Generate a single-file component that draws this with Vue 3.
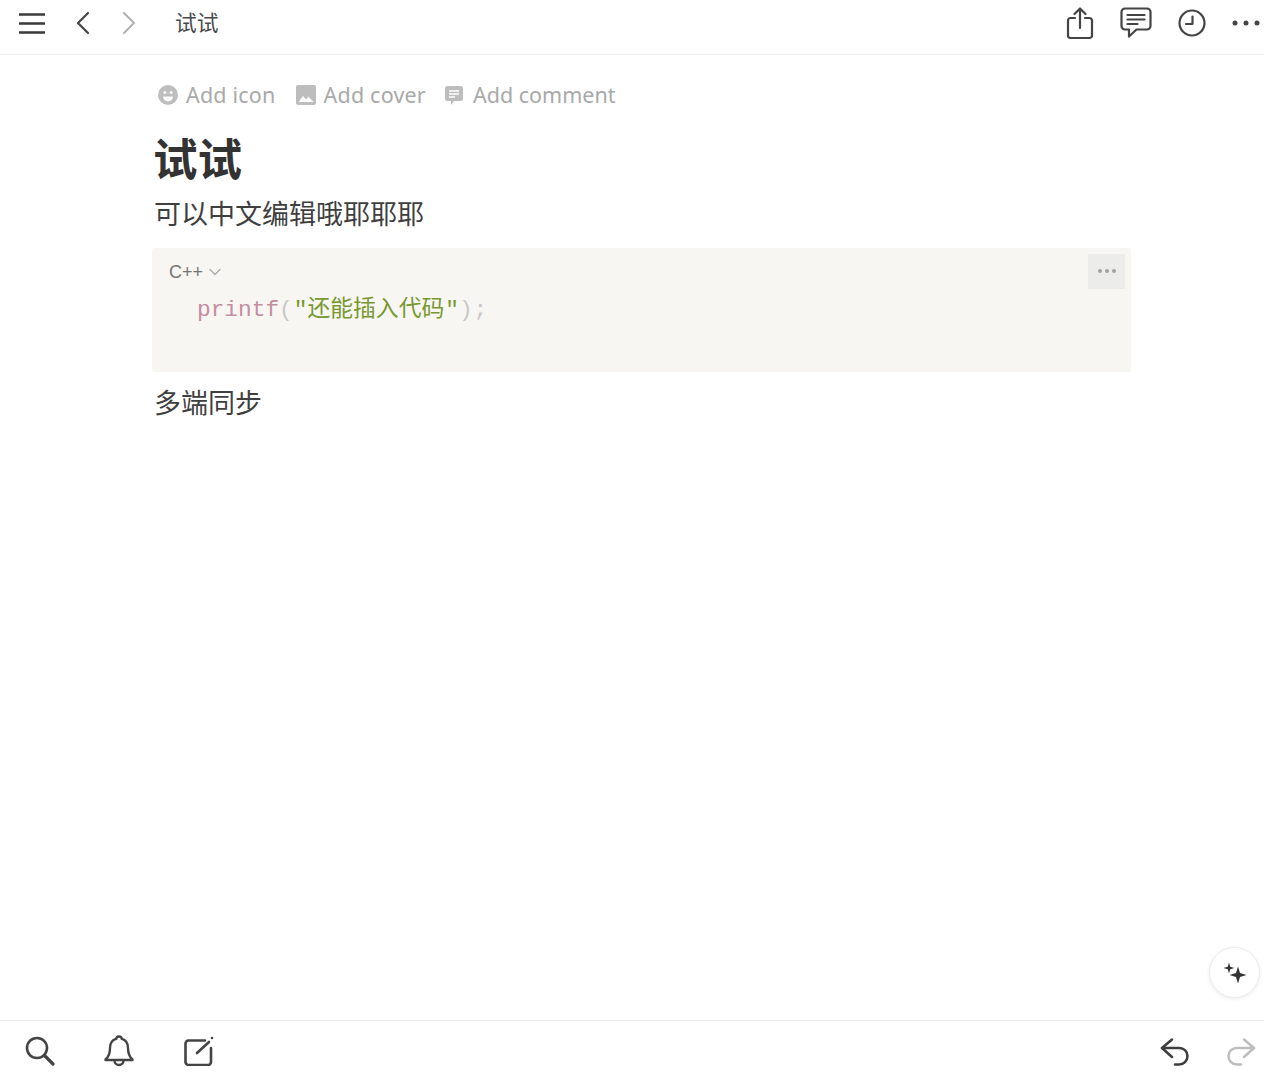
<script setup>
const pageTitle = '试试'
</script>

<template>
  <div class="page">
    <header class="top-bar">
      <div class="group-left">
        <svg class="menu" width="28" height="22" viewBox="0 0 28 22" fill="none" stroke="#3a3a3a" stroke-width="2.4">
          <path d="M1 2.5h26M1 11.5h26M1 20.5h26" />
        </svg>
        <svg class="nav back" width="16" height="26" viewBox="0 0 16 26" fill="none" stroke="#444" stroke-width="2.2" stroke-linecap="round" stroke-linejoin="round">
          <path d="M13 3 3 13l10 10" />
        </svg>
        <svg class="nav forward" width="16" height="26" viewBox="0 0 16 26" fill="none" stroke="#b4b4b4" stroke-width="2.2" stroke-linecap="round" stroke-linejoin="round">
          <path d="m3 3 10 10L3 23" />
        </svg>
        <span class="top-title">{{ pageTitle }}</span>
      </div>
      <div class="group-right">
        <svg class="share" width="28" height="34" viewBox="0 0 28 34" fill="none" stroke="#444" stroke-width="2.2" stroke-linecap="round" stroke-linejoin="round">
          <path d="M9 12H4.500A2.500 2.500 0 0 0 2 14.500v15A2.500 2.500 0 0 0 4.500 32h19a2.500 2.500 0 0 0 2.500-2.500v-15a2.500 2.500 0 0 0-2.500-2.500H19" />
          <path d="M14 22V3M8.500 8 14 2.500 19.500 8" />
        </svg>
        <svg class="comments" width="32" height="32" viewBox="0 0 32 32" fill="none" stroke="#444" stroke-width="2.200" stroke-linecap="round" stroke-linejoin="round">
          <path d="M5 1.500h22A3.500 3.500 0 0 1 30.500 5v14a3.500 3.500 0 0 1-3.500 3.500H16.500L9 29.500v-7H5A3.500 3.500 0 0 1 1.500 19V5A3.500 3.500 0 0 1 5 1.500Z" />
          <path d="M7.500 8h17M7.500 12.500h17M7.500 17h10" />
        </svg>
        <svg class="clock" width="28" height="28" viewBox="0 0 28 28" fill="none" stroke="#444" stroke-width="2.200" stroke-linecap="round" stroke-linejoin="round">
          <circle cx="14" cy="14" r="12.500" />
          <path d="M14.500 7.500v7.500H8" />
        </svg>
        <svg class="more" width="28" height="6" viewBox="0 0 28 6" fill="#444">
          <circle cx="3" cy="3" r="2.500" />
          <circle cx="14" cy="3" r="2.500" />
          <circle cx="25" cy="3" r="2.500" />
        </svg>
      </div>
    </header>

    <main class="content">
      <div class="page-actions">
        <span class="action">
          <svg width="20" height="20" viewBox="0 0 20 20">
            <circle cx="10" cy="10" r="10" fill="#bdbdbd" />
            <circle cx="6.800" cy="7.500" r="1.500" fill="#fff" />
            <circle cx="13.200" cy="7.500" r="1.500" fill="#fff" />
            <path d="M5 11.500h10a5 5 0 0 1-10 0Z" fill="#fff" />
          </svg>
          Add icon
        </span>
        <span class="action">
          <svg width="20" height="20" viewBox="0 0 20 20">
            <rect width="20" height="20" rx="2" fill="#bdbdbd" />
            <path d="m2.500 17 4.500-6 3 3.500 2.500-3 5 5.500Z" fill="#fff" />
          </svg>
          Add cover
        </span>
        <span class="action comment-action">
          <svg class="comment-icon" width="18" height="19" viewBox="0 0 18 19">
            <path d="M2.500 0h13A2.500 2.500 0 0 1 18 2.500v10a2.500 2.500 0 0 1-2.500 2.500H9l-3 4v-4H2.500A2.500 2.500 0 0 1 0 12.500v-10A2.500 2.500 0 0 1 2.500 0Z" fill="#bdbdbd" />
            <path d="M4 5h10M4 8h10M4 11h6" stroke="#fff" stroke-width="1.300" />
          </svg>
          Add comment
        </span>
      </div>

      <h1 class="title">试试</h1>
      <p class="line first-line">可以中文编辑哦耶耶耶</p>

      <section class="code-block">
        <div class="code-head">
          <span class="lang">C++</span>
          <svg width="12" height="8" viewBox="0 0 12 8" fill="none" stroke="#a8a8a8" stroke-width="1.200" stroke-linecap="round" stroke-linejoin="round">
            <path d="m1 1.500 5 5 5-5" />
          </svg>
        </div>
        <pre class="code"><span class="fn">printf</span><span class="punct">(</span><span class="str">"<span class="cjk">还能插入代码</span>"</span><span class="punct">);</span></pre>
        <button class="code-menu" type="button">
          <i></i><i></i><i></i>
        </button>
      </section>

      <p class="line last-line">多端同步</p>
    </main>

    <button class="assist" type="button">
      <svg width="26" height="26" viewBox="0 0 26 26" fill="#333">
        <path d="M16 5.500 18 12l6.500 2-6.500 2-2 6.500-2-6.500-6.500-2 6.500-2Z" />
        <path d="M7 1.500 8.200 5.800 12.500 7 8.200 8.200 7 12.500 5.800 8.200 1.500 7 5.800 5.800Z" />
      </svg>
    </button>

    <footer class="bottom-bar">
      <div class="group-bottom-left">
        <svg width="30" height="30" viewBox="0 0 30 30" fill="none" stroke="#444" stroke-width="2.600" stroke-linecap="round">
          <circle cx="12" cy="12" r="10" />
          <path d="m20 20 8 8" stroke-width="3.200" />
        </svg>
        <svg width="30" height="32" viewBox="0 0 30 32" fill="none" stroke="#444" stroke-width="2.400" stroke-linecap="round" stroke-linejoin="round">
          <path d="M15 1.500c-1.600 0-2.600 1-2.800 2.400C8 5 6 8.500 6 13c0 6-1.500 9-4.500 11.500v.5h27v-.5C25.500 22 24 19 24 13c0-4.500-2-8-6.200-9.100-.2-1.400-1.200-2.400-2.800-2.400Z" />
          <path d="M10.500 25.500a4.500 4.500 0 0 0 9 0" />
        </svg>
        <svg class="edit" width="30" height="30" viewBox="0 0 30 30" fill="none" stroke="#444" stroke-width="2.600" stroke-linecap="round" stroke-linejoin="round">
          <path d="M21 4.500H4.500a3 3 0 0 0-3 3V26a3 3 0 0 0 3 3H24a3 3 0 0 0 3-3V12" />
          <path d="M13 17 25 6" />
          <circle cx="28" cy="2" r="1.300" fill="#444" stroke="none" />
        </svg>
      </div>
      <div class="group-bottom-right">
        <svg width="30" height="30" viewBox="0 0 30 30" fill="none" stroke="#3d3d3d" stroke-width="2.500" stroke-linecap="round" stroke-linejoin="round">
          <path d="M12 1.500 2 10l10 9" />
          <path d="M2 10h17a8 8 0 0 1 8.500 8 8.500 8.500 0 0 1-8.500 8.500h-4" />
        </svg>
        <svg width="30" height="30" viewBox="0 0 30 30" fill="none" stroke="#bdbdbd" stroke-width="2.500" stroke-linecap="round" stroke-linejoin="round">
          <path d="m18 1.500 10 8.500-10 9" />
          <path d="M28 10H11a8 8 0 0 0-8.500 8 8.500 8.500 0 0 0 8.500 8.500h4" />
        </svg>
      </div>
    </footer>
  </div>
</template>

<style scoped>
.page {
  position: relative;
  display: flex;
  flex-direction: column;
  width: 1264px;
  height: 1080px;
  background: #fff;
  color: #373737;
  font-family: "Noto Sans", "Noto Sans CJK SC", sans-serif;
  overflow: hidden;
}

svg {
  display: block;
  flex: none;
}

.top-bar {
  display: flex;
  flex: none;
  justify-content: space-between;
  align-items: center;
  height: 55px;
  box-sizing: border-box;
  padding: 0 4px 9px 18px;
  border-bottom: 1.5px solid #eeeeee;
}

.group-left,
.group-right {
  display: flex;
  align-items: center;
}

.menu {
  margin-right: 29px;
}

.forward {
  margin-left: 30px;
}

.top-title {
  margin-left: 38px;
  font-size: 21.8px;
  line-height: 28px;
  color: #4a4a4a;
}

.share,
.comments,
.clock {
  margin-right: 26px;
}

.content {
  flex: 1;
  padding: 25px 0 0 155px;
}

.page-actions {
  display: flex;
  align-items: center;
  gap: 20px;
  height: 30px;
  margin-left: 3px;
}

.action {
  display: flex;
  align-items: center;
  gap: 8px;
  font-size: 21.5px;
  line-height: 30px;
  color: #a9a9a9;
  letter-spacing: 0.2px;
}

.comment-action {
  letter-spacing: 0;
}

.comment-icon {
  margin: 0 2px 0 -1px;
}

.title {
  margin: 19px 0 0 -2px;
  font-size: 44.5px;
  line-height: 60px;
  font-weight: 700;
  color: #333;
}

.line {
  margin: 0 0 0 -1px;
  font-size: 27px;
  line-height: 40px;
  color: #3f3f3f;
}

.first-line {
  margin-top: 5px;
}

.code-block {
  position: relative;
  width: 979px;
  height: 124px;
  box-sizing: border-box;
  margin: 14px 0 0 -3px;
  padding: 12px 0 0 17px;
  background: #f7f6f3;
  border-radius: 3px;
}

.code-head {
  display: flex;
  align-items: center;
  gap: 6px;
  height: 24px;
}

.lang {
  font-family: "Liberation Sans", sans-serif;
  font-size: 18px;
  color: #757575;
}

.code {
  margin: 12px 0 0 28px;
  font-family: "Liberation Mono", "Noto Sans CJK SC", monospace;
  font-size: 22.8px;
  line-height: 28px;
  color: #b0b0b0;
}

.fn {
  color: #c48da0;
}

.punct {
  color: #c8c8c8;
  letter-spacing: 1px;
}

.str {
  color: #77992f;
}

.cjk {
  margin: 0 1px 0 0;
}

.code-menu {
  position: absolute;
  top: 6px;
  right: 6px;
  display: flex;
  justify-content: center;
  align-items: center;
  gap: 3px;
  width: 37px;
  height: 35px;
  padding: 0 0 2px;
  border: none;
  background: #ececea;
}

.code-menu i {
  width: 4px;
  height: 4px;
  border-radius: 50%;
  background: #a3a3a3;
}

.last-line {
  margin-top: 11px;
}

.assist {
  position: absolute;
  top: 947px;
  left: 1209px;
  display: flex;
  justify-content: center;
  align-items: center;
  width: 51px;
  height: 51px;
  padding: 3px 0 0 1px;
  background: #fff;
  border: 1px solid #ebebeb;
  border-radius: 50%;
  box-shadow: 0 1px 4px rgba(0, 0, 0, 0.08);
}

.bottom-bar {
  display: flex;
  flex: none;
  justify-content: space-between;
  align-items: center;
  height: 60px;
  box-sizing: border-box;
  padding: 0 8px 0 25px;
  border-top: 1.5px solid #ececec;
}

.group-bottom-left {
  display: flex;
  align-items: center;
  gap: 49px;
}

.edit {
  margin-left: 1px;
}

.group-bottom-right {
  display: flex;
  align-items: center;
  gap: 36px;
  padding-top: 4px;
}
</style>
